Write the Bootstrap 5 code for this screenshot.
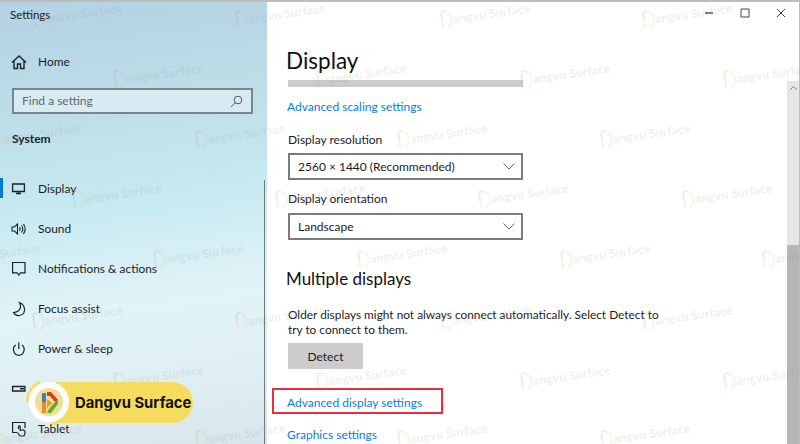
<!DOCTYPE html>
<html lang="en">
<head>
<meta charset="utf-8">
<title>Settings</title>
<link href="https://cdn.jsdelivr.net/npm/bootstrap@5.3.0/dist/css/bootstrap.min.css" rel="stylesheet">
<style>
html,body{height:100%;margin:0;overflow:hidden}
body{font-family:"Lato","Open Sans",sans-serif;font-size:12px;color:#1c1c1c;background:#fff}
.win{height:444px;width:800px;position:relative;border-top:2px solid #bdbdbd;overflow:hidden}
.side{width:267px;flex:none;background:linear-gradient(172deg,#b3d2e3 0%,#bcdce8 22%,#c6eaf1 45%,#e2f4f8 68%,#dfeef2 85%,#d8e6ea 100%);position:relative;height:442px}
.side-line{position:absolute;left:264px;top:178px;bottom:0;width:1px;background:#6f7c80}
.app-title{font-size:11.5px;padding:4px 0 0 10px;height:40px;line-height:18px}
.nav-row{height:40px;display:flex;align-items:center;padding-left:9px;font-size:11.9px;position:relative}
.nav-row svg{width:20px;height:20px;flex:none;margin-right:5px}
.nav-row span{padding-bottom:1px}
.search-box{margin:6px 14px 0 12px;height:26px;border:2px solid #72878f;background:#d9ebf2;color:#5b6a70;font-size:12px;padding:0 8px}
.sys-head{font-weight:700;font-size:12px;padding-left:12px;margin-top:12px;height:26px;line-height:26px}
.sys-items{margin-top:17px}
.sel-mark{position:absolute;left:0;top:9px;width:3px;height:20px;background:#0078d7}
.pane{flex:1 1 auto;position:relative;padding-left:19px;height:442px}
.pg-title{font-size:22.500px;line-height:32px;margin:0;padding-top:43px;font-weight:400;color:#111}
.slider-bar{width:235px;height:7px;background:#cbcbcb;margin-top:3px;margin-left:2px}
.ms-link{display:block;color:#0f7bd0;text-decoration:none;font-size:12px;line-height:18px;margin-left:1px}
.lnk-a{margin-top:11px}
.fld{line-height:18px;margin-left:2px}
.fld-a{margin-top:15px}
.fld-b{margin-top:10px}
.ms-select{width:235px;height:27px;border:2px solid #7c7c7c;margin-left:2px;padding:0 6px 0 8px;font-size:12px;line-height:23px}
.sel-a{margin-top:4px}
.sel-b{margin-top:5px}
.sec-title{font-size:17px;font-weight:400;line-height:24px;margin:27px 0 0;color:#111}
.para{width:376px;font-size:11.850px;line-height:15px;margin:16px 0 0 2px}
.detect{display:block;background:#cccccc;width:75px;height:26px;border:0;border-radius:0;padding:2px 0 0;font-size:12px;color:#1c1c1c;margin:6px 0 0 2px}
.redbox{position:absolute;left:-14px;top:-6px;width:171px;height:26px;border:2px solid #ee2c3c}
.link-wrap{position:relative;margin-top:25px}
.lnk-g{margin-top:14px}
.win-ctl{position:absolute;right:1px;top:0;display:flex}
.win-ctl span{width:36px;height:22px;display:flex;align-items:center;justify-content:center}
.sb{position:absolute;right:1px;top:79px;bottom:0;width:12px;background:#e6e6e6}
.sb svg{display:block;margin:4px auto 0}
.sb-thumb{position:absolute;left:0;right:0;top:164px;bottom:0;background:#b6b6b6}
.win-r{position:absolute;right:0;top:0;bottom:0;width:1px;background:#bdbdbd}
.wm-layer{position:absolute;left:0;top:0;pointer-events:none}
.wm-t{font-family:"Lato","Open Sans",sans-serif;font-size:12px;font-weight:700;fill:#8a8a8a;letter-spacing:.2px}
.badge-wrap{position:absolute;left:26px;top:378px;width:168px;height:46px}
.badge-pill{position:absolute;left:30px;top:2px;width:137px;height:41px;border-radius:0 21px 21px 0;background:#f5dc5e;color:#111;font-family:"Inter","Liberation Sans",sans-serif;font-weight:700;font-size:14.800px;line-height:42px;padding-left:19px;white-space:nowrap}
.badge-logo{position:absolute;left:0;top:0;width:46px;height:46px}
</style>
</head>
<body>
<div class="win d-flex">
  <aside class="side">
    <div class="app-title">Settings</div>
    <div class="nav-row">
      <svg viewBox="0 0 20 20" fill="none" stroke="#1c2226" stroke-width="1.4"><path d="M3 10.500 10 4 17 10.500M5 9V16.500H8.500V12H11.500V16.500H15V9"/></svg>
      <span class="ms-1">Home</span>
    </div>
    <div class="search-box d-flex align-items-center justify-content-between">
      <span>Find a setting</span>
      <svg width="13" height="13" viewBox="0 0 13 13" fill="none" stroke="#556" stroke-width="1"><circle cx="8" cy="5" r="3.8"/><path d="M5.2 7.8 1 12"/></svg>
    </div>
    <div class="sys-head">System</div>
    <div class="sys-items">
      <div class="nav-row"><i class="sel-mark"></i>
        <svg viewBox="0 0 20 20" fill="none" stroke="#1c2226" stroke-width="1.3"><path d="M3.600 5H15.400V12.500H3.600ZM7 14.500H12M9.500 12.500V14.500"/></svg>
        <span class="ms-1">Display</span></div>
      <div class="nav-row">
        <svg viewBox="0 0 20 20" fill="none" stroke="#1c2226" stroke-width="1.1"><path d="M3 8V12H5.500L8.500 15V5L5.500 8ZM10.500 8.200C11.300 9.200 11.300 10.800 10.500 11.800M12.500 6.500C14 8.500 14 11.500 12.500 13.500M14.500 5C16.500 8 16.500 12 14.500 15"/></svg>
        <span class="ms-1">Sound</span></div>
      <div class="nav-row">
        <svg viewBox="0 0 20 20" fill="none" stroke="#1c2226" stroke-width="1.2"><path d="M3.600 3.500H16V13.800H11.500L9.800 16 8.100 13.800H3.600Z"/></svg>
        <span class="ms-1">Notifications &amp; actions</span></div>
      <div class="nav-row">
        <svg viewBox="0 0 20 20" fill="none" stroke="#1c2226" stroke-width="1.2"><path d="M10.500 3.500C13 8 11 13 4.500 13.500C6.500 17.500 12.500 17.500 14.800 14C16.800 10.500 15 5 10.500 3.500Z"/></svg>
        <span class="ms-1">Focus assist</span></div>
      <div class="nav-row">
        <svg viewBox="0 0 20 20" fill="none" stroke="#1c2226" stroke-width="1.2"><path d="M6.800 6C2.500 8.700 4.500 16.300 9.800 16.300S17.100 8.700 12.800 6M9.800 3.300V10"/></svg>
        <span class="ms-1">Power &amp; sleep</span></div>
      <div class="nav-row">
        <svg viewBox="0 0 20 20" fill="none" stroke="#1c2226" stroke-width="1.4"><path d="M3.600 7.500H15.900V12H3.600ZM11 9.800H15"/></svg>
        <span class="ms-1">Storage</span></div>
      <div class="nav-row">
        <svg viewBox="0 0 20 20" fill="none" stroke="#1c2226" stroke-width="1.2"><path d="M8 13.500H3.600V3.500H16V9M9.500 10V7.500C9.500 6.500 11.200 6.500 11.200 7.500V11.500L13 11C15 10.800 16.500 11.500 16 14L15 17H10.800L8.500 13.500"/></svg>
        <span class="ms-1">Tablet</span></div>
    </div>
    <i class="side-line"></i>
  </aside>
  <main class="pane">
    <h1 class="pg-title">Display</h1>
    <div class="slider-bar"></div>
    <a class="ms-link lnk-a" href="#">Advanced scaling settings</a>
    <div class="fld fld-a">Display resolution</div>
    <div class="ms-select sel-a d-flex align-items-center justify-content-between">
      <span>2560 × 1440 (Recommended)</span>
      <svg width="12" height="7" viewBox="0 0 12 7" fill="none" stroke="#666" stroke-width="1"><path d="M.5 .5 6 6 11.500 .5"/></svg>
    </div>
    <div class="fld fld-b">Display orientation</div>
    <div class="ms-select sel-b d-flex align-items-center justify-content-between">
      <span>Landscape</span>
      <svg width="12" height="7" viewBox="0 0 12 7" fill="none" stroke="#666" stroke-width="1"><path d="M.5 .5 6 6 11.500 .5"/></svg>
    </div>
    <h2 class="sec-title">Multiple displays</h2>
    <p class="para">Older displays might not always connect automatically. Select Detect to try to connect to them.</p>
    <button class="btn detect" type="button">Detect</button>
    <div class="link-wrap"><a class="ms-link" href="#">Advanced display settings</a><i class="redbox"></i></div>
    <a class="ms-link lnk-g" href="#">Graphics settings</a>
  </main>
  <div class="win-ctl">
    <span><svg width="10" height="10" viewBox="0 0 10 10" stroke="#555" stroke-width="1.5"><path d="M1 5H9"/></svg></span>
    <span><svg width="10" height="10" viewBox="0 0 10 10" fill="none" stroke="#444" stroke-width="1"><path d="M1 1H9V9H1Z"/></svg></span>
    <span><svg width="10" height="10" viewBox="0 0 10 10" fill="none" stroke="#444" stroke-width="1"><path d="M1 1 9 9M9 1 1 9"/></svg></span>
  </div>
  <div class="sb"><svg width="9" height="6" viewBox="0 0 9 6" fill="none" stroke="#888" stroke-width="1"><path d="M1 5 4.500 1.500 8 5"/></svg><div class="sb-thumb"></div></div>
  <i class="win-r"></i>
  <svg class="wm-layer" width="800" height="442" viewBox="0 2 800 442" opacity=".13">
    <defs>
      <g id="wm" transform="rotate(-8)">
        <path d="M1 0H5" fill="none" stroke="#e8503a" stroke-width="2"/>
        <path d="M5 0C12 3 13 11 6 17" fill="none" stroke="#f0b030" stroke-width="2"/>
        <path d="M1 1V9" fill="none" stroke="#3a86e0" stroke-width="2"/>
        <path d="M1 9V16" fill="none" stroke="#ef8a2c" stroke-width="2"/>
        <text class="wm-t" x="12" y="13">angvu Surface</text>
      </g>
    </defs>
    <use href="#wm" transform="translate(32,12)"/><use href="#wm" transform="translate(235,12)"/><use href="#wm" transform="translate(440,12)"/><use href="#wm" transform="translate(642,12)"/>
    <use href="#wm" transform="translate(113,72)"/><use href="#wm" transform="translate(316,72)"/><use href="#wm" transform="translate(520,72)"/><use href="#wm" transform="translate(723,72)"/>
    <use href="#wm" transform="translate(-9,132)"/><use href="#wm" transform="translate(195,132)"/><use href="#wm" transform="translate(397,132)"/><use href="#wm" transform="translate(600,132)"/>
    <use href="#wm" transform="translate(72,192)"/><use href="#wm" transform="translate(275,192)"/><use href="#wm" transform="translate(478,192)"/><use href="#wm" transform="translate(682,192)"/>
    <use href="#wm" transform="translate(-50,252)"/><use href="#wm" transform="translate(153,252)"/><use href="#wm" transform="translate(357,252)"/><use href="#wm" transform="translate(560,252)"/><use href="#wm" transform="translate(762,252)"/>
    <use href="#wm" transform="translate(32,314)"/><use href="#wm" transform="translate(235,314)"/><use href="#wm" transform="translate(440,314)"/><use href="#wm" transform="translate(642,314)"/>
    <use href="#wm" transform="translate(113,374)"/><use href="#wm" transform="translate(316,374)"/><use href="#wm" transform="translate(520,374)"/><use href="#wm" transform="translate(723,374)"/>
    <use href="#wm" transform="translate(-9,432)"/><use href="#wm" transform="translate(195,432)"/><use href="#wm" transform="translate(397,432)"/><use href="#wm" transform="translate(600,432)"/>
  </svg>
  <div class="badge-wrap">
    <div class="badge-pill">Dangvu Surface</div>
    <svg class="badge-logo" viewBox="0 0 46 46">
      <circle cx="23" cy="22" r="20" fill="#fff"/>
      <path d="M1 22A22 22 0 0 1 14 2" fill="none" stroke="#f5dc5e" stroke-width="2.500"/>
      <path d="M45 20A22 22 0 0 1 26 44" fill="none" stroke="#f5dc5e" stroke-width="2.500"/>
      <circle cx="23" cy="22" r="14" fill="#eedf92"/>
      <path d="M16 13H20V22H16Z" fill="#3a7fd0"/>
      <path d="M16 22H20V33H16Z" fill="#ef8a2c"/>
      <path d="M21 12H25L32 20 29 22 24 16H21Z" fill="#d93a2c"/>
      <path d="M32 20V24L25 33H21L23 29 29 22Z" fill="#6aa83c"/>
      <path d="M21 19 26 23 21 28Z" fill="#e0a030"/>
    </svg>
  </div>
</div>
<script src="https://cdn.jsdelivr.net/npm/bootstrap@5.3.0/dist/js/bootstrap.bundle.min.js"></script>
</body>
</html>
